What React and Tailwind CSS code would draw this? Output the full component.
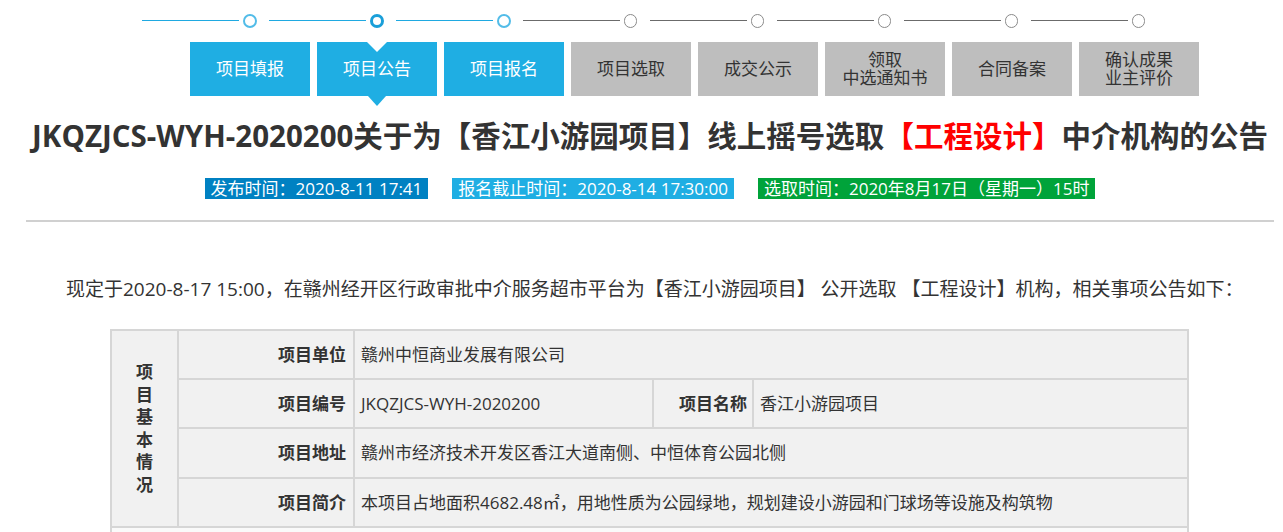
import React from 'react'

const steps = [
    { label: "项目填报", done: true },
    { label: "项目公告", done: true, active: true },
    { label: "项目报名", done: true },
    { label: "项目选取" },
    { label: "成交公示" },
    { label: ["领取", "中选通知书"] },
    { label: "合同备案" },
    { label: ["确认成果", "业主评价"] },
]

function Stepper() {
    return (
        <div className="pl-[142px]">
            {/* line + circle track */}
            <div className="flex items-center h-[42px] pb-[1px]">
                {steps.map((s, i) => (
                    <div key={i} className="flex items-center w-[127px] shrink-0">
                        <div className={`h-[1px] w-[97px] ${s.done ? "bg-[#1fa9e1]" : "bg-[#6b6b6b]"}`}></div>
                        <div
                            className={`ml-[4px] mr-[12px] rounded-full bg-white ${s.active
                                ? "w-[14px] h-[14px] border-[3px] border-[#1a9fd9]"
                                : s.done
                                    ? "w-[14px] h-[14px] border-2 border-[#52bce8]"
                                    : "w-[13px] h-[14px] border-[1.5px] border-[#8a8a8a]"
                                }`}
                        ></div>
                    </div>
                ))}
            </div>
            {/* step buttons */}
            <div className="flex gap-[7px] pl-[48px]">
                {steps.map((s, i) => (
                    <div
                        key={i}
                        className={`relative w-[120px] h-[54px] shrink-0 flex flex-col items-center justify-center text-[17px] leading-[18px] ${s.done ? "bg-[#1faee3] text-white" : "bg-[#bebebe] text-[#333]"}`}
                    >
                        {Array.isArray(s.label) ? s.label.map((t) => <span key={t}>{t}</span>) : <span>{s.label}</span>}
                        {s.active && (
                            <>
                                <span className="absolute top-0 left-1/2 -translate-x-1/2 w-0 h-0 border-l-[10px] border-r-[10px] border-t-[10px] border-l-transparent border-r-transparent border-t-white"></span>
                                <span className="absolute top-full left-1/2 -translate-x-1/2 w-0 h-0 border-l-[9px] border-r-[9px] border-t-[10px] border-l-transparent border-r-transparent border-t-[#1faee3]"></span>
                            </>
                        )}
                    </div>
                ))}
            </div>
        </div>
    )
}

export default function App() {
    return (
        <div className="w-[1283px] h-[532px] overflow-hidden bg-white text-[#333] font-['Open_Sans','Noto_Sans_CJK_SC',sans-serif]">
            <Stepper />

            <div className="ml-[26px] w-[1248px]">
                {/* Title */}
                <h1 className="mt-[18px] text-center text-[29.5px] leading-[44px] font-bold text-[#333] whitespace-nowrap">
                    JKQZJCS-WYH-2020200关于为【香江小游园项目】线上摇号选取<span className="text-[#ff0000]">【工程设计】</span>中介机构的公告
                </h1>

                {/* time badges */}
                <div className="mt-[20px] flex justify-center gap-[24px] text-white text-[17px] leading-[21px]">
                    <span className="bg-[#0081c2] px-[6px] h-[21px]">发布时间：2020-8-11 17:41</span>
                    <span className="bg-[#1faee3] px-[6px] h-[21px]">报名截止时间：2020-8-14 17:30:00</span>
                    <span className="bg-[#00a33a] px-[6px] h-[21px]">选取时间：2020年8月17日（星期一）15时</span>
                </div>

                <div className="mt-[21px] border-t-2 border-[#d0d0d0]"></div>

                {/* intro */}
                <p className="mt-[54px] pl-[40px] text-[19px] leading-[26px] whitespace-nowrap">
                    现定于2020-8-17 15:00，在赣州经开区行政审批中介服务超市平台为【香江小游园项目】 公开选取 【工程设计】机构，相关事项公告如下：
                </p>

                {/* basic info table */}
                <table className="mt-[27px] ml-[84px] w-[1079px] border-collapse text-[17px] table-fixed">
                    <colgroup>
                        <col className="w-[67px]" />
                        <col className="w-[176px]" />
                        <col className="w-[299px]" />
                        <col className="w-[100px]" />
                        <col />
                    </colgroup>
                    <tbody className="bg-[#f1f1f1]">
                        <tr className="h-[49px]">
                            <th rowSpan={4} className="border-2 border-[#d6d6d6] font-bold text-[17px] leading-[22.5px] text-center">
                                <div className="flex flex-col items-center">
                                    {"项目基本情况".split("").map((c) => <span key={c}>{c}</span>)}
                                </div>
                            </th>
                            <th className="border-2 border-[#d6d6d6] text-right pr-[7px] font-bold">项目单位</th>
                            <td colSpan={3} className="border-2 border-[#d6d6d6] pl-[6px]">赣州中恒商业发展有限公司</td>
                        </tr>
                        <tr className="h-[49px]">
                            <th className="border-2 border-[#d6d6d6] text-right pr-[7px] font-bold">项目编号</th>
                            <td className="border-2 border-[#d6d6d6] pl-[6px]">JKQZJCS-WYH-2020200</td>
                            <th className="border-2 border-[#d6d6d6] text-right pr-[5px] font-bold">项目名称</th>
                            <td className="border-2 border-[#d6d6d6] pl-[6px]">香江小游园项目</td>
                        </tr>
                        <tr className="h-[50px]">
                            <th className="border-2 border-[#d6d6d6] text-right pr-[7px] font-bold">项目地址</th>
                            <td colSpan={3} className="border-2 border-[#d6d6d6] pl-[6px]">赣州市经济技术开发区香江大道南侧、中恒体育公园北侧</td>
                        </tr>
                        <tr className="h-[49px]">
                            <th className="border-2 border-[#d6d6d6] text-right pr-[7px] font-bold">项目简介</th>
                            <td colSpan={3} className="border-2 border-[#d6d6d6] pl-[6px]">本项目占地面积4682.48㎡，用地性质为公园绿地，规划建设小游园和门球场等设施及构筑物</td>
                        </tr>
                        <tr className="h-[49px] bg-[#fafafa]">
                            <td colSpan={5} className="border-2 border-[#d6d6d6]"></td>
                        </tr>
                    </tbody>
                </table>
            </div>
        </div>
    )
}
